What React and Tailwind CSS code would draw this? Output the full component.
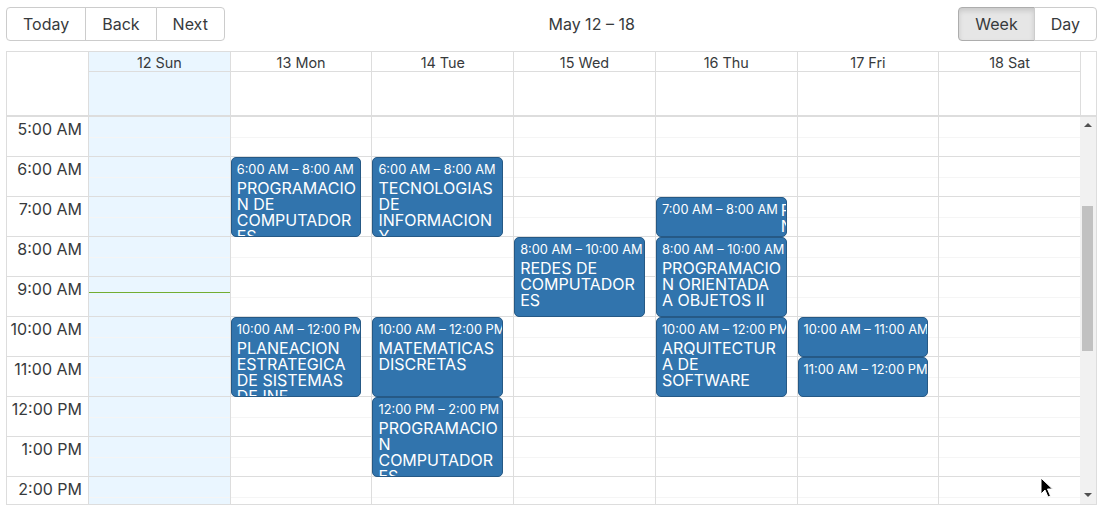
import React from "react";

const days = [
  { label: "12 Sun", today: true },
  { label: "13 Mon" },
  { label: "14 Tue" },
  { label: "15 Wed" },
  { label: "16 Thu" },
  { label: "17 Fri" },
  { label: "18 Sat" },
];

const hours = [
  "5:00 AM",
  "6:00 AM",
  "7:00 AM",
  "8:00 AM",
  "9:00 AM",
  "10:00 AM",
  "11:00 AM",
  "12:00 PM",
  "1:00 PM",
  "2:00 PM",
];

// start is the hour of day, dur in hours
const events = [
  { day: 1, start: 6, dur: 2, label: "6:00 AM – 8:00 AM", lines: ["PROGRAMACIO", "N DE", "COMPUTADOR", "ES"] },
  { day: 1, start: 10, dur: 2, label: "10:00 AM – 12:00 PM", lines: ["PLANEACION", "ESTRATEGICA", "DE SISTEMAS", "DE INF"] },
  { day: 2, start: 6, dur: 2, label: "6:00 AM – 8:00 AM", lines: ["TECNOLOGIAS", "DE", "INFORMACION", "Y"] },
  { day: 2, start: 10, dur: 2, label: "10:00 AM – 12:00 PM", lines: ["MATEMATICAS", "DISCRETAS"] },
  { day: 2, start: 12, dur: 2, label: "12:00 PM – 2:00 PM", lines: ["PROGRAMACIO", "N", "COMPUTADOR", "ES"] },
  { day: 3, start: 8, dur: 2, label: "8:00 AM – 10:00 AM", lines: ["REDES DE", "COMPUTADOR", "ES"] },
  { day: 4, start: 7, dur: 1, label: "7:00 AM – 8:00 AM", lines: ["PROGRAMACIO", "N ORIENTADA", "A OBJETOS I"] },
  { day: 4, start: 8, dur: 2, label: "8:00 AM – 10:00 AM", lines: ["PROGRAMACIO", "N ORIENTADA", "A OBJETOS II"] },
  { day: 4, start: 10, dur: 2, label: "10:00 AM – 12:00 PM", lines: ["ARQUITECTUR", "A DE", "SOFTWARE"] },
  { day: 5, start: 10, dur: 1, label: "10:00 AM – 11:00 AM", lines: ["SEMINARIO"] },
  { day: 5, start: 11, dur: 1, label: "11:00 AM – 12:00 PM", lines: ["SEMINARIO"] },
];

const ToolbarButton = ({ children, first, last, active }) => (
  <button
    className={
      "px-4 py-[6px] border text-[16px] leading-[20px] text-[#373a3c] " +
      (first ? "rounded-l-[4px] " : "-ml-px ") +
      (last ? "rounded-r-[4px] " : "") +
      (active
        ? "bg-[#e6e6e6] border-[#adadad] shadow-[inset_0_3px_5px_rgba(0,0,0,0.125)]"
        : "bg-white border-[#ccc]")
    }
  >
    {children}
  </button>
);

const CalendarEvent = ({ ev }) => {
  const style = { top: (ev.start - 5) * 40, height: ev.dur * 40 };
  const short = ev.dur === 1;
  return (
    <div
      className={
        "absolute left-0 right-0 overflow-hidden rounded-[5px] border border-[#265985] bg-[#3174ad] px-[5px] py-[2px] text-white flex items-start " +
        (short ? "flex-row" : "flex-col")
      }
      style={style}
    >
      <div className={"shrink-0 whitespace-nowrap pt-px text-[12.8px] leading-[17px] " + (short ? "pr-[3px]" : "pr-[5px]")}>
        {ev.label}
      </div>
      <div className={"shrink-0 pt-[2px] text-[16px] leading-4 " + (short ? "w-[119px]" : "")}>
        {ev.lines.map((l, i) => (
          <div key={i} className="whitespace-nowrap">
            {l}
          </div>
        ))}
      </div>
    </div>
  );
};

const DayColumn = ({ day, index }) => (
  <div className={"relative flex-1 border-l border-[#ddd] " + (day.today ? "bg-[#eaf6ff]" : "bg-white")}>
    {hours.map((h) => (
      <div key={h} className="h-[40px] border-b border-[#ddd] flex flex-col">
        <div className="h-[20px]" />
        <div className="flex-1 border-t border-[#f5f5f5]" />
      </div>
    ))}
    {day.today && <div className="absolute left-0 right-0 top-[175px] h-px bg-[#74ad31]" />}
    <div className="absolute top-0 bottom-0 left-0 right-[10px]">
      {events
        .filter((e) => e.day === index)
        .map((e, i) => (
          <CalendarEvent key={i} ev={e} />
        ))}
    </div>
  </div>
);

export default function App() {
  return (
    <div className="relative w-[1103px] h-[514px] bg-white px-[6px] pt-[7px] text-[#373a3c] font-['Inter','Noto_Sans',sans-serif]">
      <div className="flex items-center mb-[10px]">
        <div className="flex">
          <ToolbarButton first>Today</ToolbarButton>
          <ToolbarButton>Back</ToolbarButton>
          <ToolbarButton last>Next</ToolbarButton>
        </div>
        <div className="flex-1 text-center text-[16px] px-[10px]">May 12 – 18</div>
        <div className="flex">
          <ToolbarButton first active>
            Week
          </ToolbarButton>
          <ToolbarButton last>Day</ToolbarButton>
        </div>
      </div>

      <div className="border border-[#ddd] flex flex-col">
        {/* header */}
        <div className="flex">
          <div className="w-[81px] shrink-0" />
          {days.map((d) => (
            <div key={d.label} className={"flex-1 border-l border-[#ddd] " + (d.today ? "bg-[#eaf6ff]" : "")}>
              <div className="h-[20px] border-b border-[#ddd] pt-px text-center text-[14.4px] leading-[19px]">{d.label}</div>
              <div className="h-[43px]" />
            </div>
          ))}
          <div className="w-[16px] shrink-0 border-l border-[#ddd]" />
        </div>

        {/* body */}
        <div className="flex h-[389px] overflow-hidden border-t-2 border-[#ddd]">
          <div className="w-[81px] shrink-0">
            {hours.map((h) => (
              <div key={h} className="h-[40px] border-b border-[#ddd] pr-[6px] pt-[3px] text-right text-[16px] leading-[19px]">
                {h}
              </div>
            ))}
          </div>
          {days.map((d, i) => (
            <DayColumn key={d.label} day={d} index={i} />
          ))}
          <div className="relative w-[16px] shrink-0 bg-[#f1f1f1]">
            <div className="absolute left-1/2 top-[6px] -translate-x-1/2 w-0 h-0 border-x-[4px] border-x-transparent border-b-[4px] border-b-[#505050]" />
            <div className="absolute left-[2px] top-[89px] w-[11px] h-[145px] bg-[#c1c1c1]" />
            <div className="absolute left-1/2 bottom-[7px] -translate-x-1/2 w-0 h-0 border-x-[4px] border-x-transparent border-t-[4px] border-t-[#505050]" />
          </div>
        </div>
      </div>

      <svg className="absolute left-[1040px] top-[477px]" width="14" height="22" viewBox="0 0 14 22">
        <path d="M1 1 L1 17 L5 13 L8 20 L10.5 19 L7.5 12 L12.5 12 Z" fill="#000" stroke="#fff" strokeWidth="1" />
      </svg>
    </div>
  );
}
